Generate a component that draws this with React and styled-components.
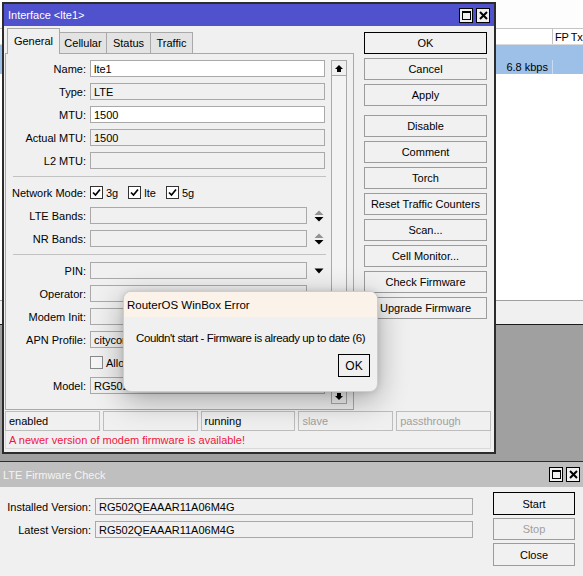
import React from "react";
import styled, { createGlobalStyle } from "styled-components";

const FONT = `"Liberation Sans", Arial, sans-serif`;
const FACE = "#f0f0f0";
const EDGE = "#a9a9a9";
const ACTIVE_TITLE = "#4f52cc";
const INACTIVE_TITLE = "#bfbfbf";
const SELECTED_ROW = "#9dc0e8";
const DISABLED_TEXT = "#a0a0a0";

const GlobalStyle = createGlobalStyle`
  html, body { margin: 0; padding: 0; }
  body { font-family: ${FONT}; font-size: 11px; color: #000; }
  * { box-sizing: border-box; }
`;

const Desktop = styled.div`
  position: relative;
  width: 583px;
  height: 576px;
  overflow: hidden;
  background: #a0a0a0;
`;

/* ---------- main list window behind ---------- */

const ListWindow = styled.section`
  position: absolute;
  left: -4px;
  top: -4px;
  width: 592px;
  height: 329px;
  display: flex;
  flex-direction: column;
  background: #fff;
  border-bottom: 1px solid #1c1c1c;
`;

const Toolbar = styled.div`
  height: 32px;
  flex: none;
  background: #fdfdfd;
`;

const ListHeader = styled.div`
  display: grid;
  grid-template-columns: 556px 1fr;
  height: 17px;
  flex: none;
  border-top: 1px solid #c4c4c4;
  border-bottom: 1px solid #dadada;
  background: #fff;
`;

const HeadCell = styled.div`
  display: flex;
  align-items: center;
  padding-left: 2px;
  letter-spacing: -0.3px;
  white-space: nowrap;
  border-left: ${(p) => (p.$first ? "none" : "1px solid #c4c4c4")};
`;

const ListRow = styled.div`
  display: grid;
  grid-template-columns: 556px 1fr;
  height: ${(p) => p.$h}px;
  flex: none;
  background: ${SELECTED_ROW};
`;

const RowCell = styled.div`
  display: flex;
  align-items: center;
  justify-content: ${(p) => (p.$right ? "flex-end" : "flex-start")};
  padding: 0 4px 0 3px;
  border-left: ${(p) => (p.$first ? "none" : "1px solid #c9dcf2")};
`;

const ListSpace = styled.div`
  flex: 1;
  background: #fff;
`;

const ListStatus = styled.div`
  height: 24px;
  flex: none;
  background: ${FACE};
  border-top: 1px solid #a0a0a0;
`;

/* ---------- shared window parts ---------- */

const TitleBar = styled.div`
  height: ${(p) => p.$h}px;
  flex: none;
  display: flex;
  align-items: center;
  justify-content: space-between;
  padding: 0 4px 0 ${(p) => p.$pad}px;
  background: ${(p) => (p.$active ? ACTIVE_TITLE : INACTIVE_TITLE)};
  color: ${(p) => (p.$active ? "#fff" : "#f4f4f4")};
  font-size: 11px;
`;

const TitleButtons = styled.div`
  display: flex;
  gap: 3px;
`;

const TitleBox = styled.span`
  width: 14px;
  height: 15px;
  display: flex;
  align-items: center;
  justify-content: center;
  background: #f0f0f0;
  border: 1px solid #000;
`;

const Button = styled.div`
  height: ${(p) => p.$h || 22}px;
  display: flex;
  align-items: center;
  justify-content: center;
  background: #f1f1f1;
  border: 1px solid ${(p) => (p.$default ? "#000" : "#9c9c9c")};
  color: ${(p) => (p.$disabled ? DISABLED_TEXT : "#000")};
  font-size: 11px;
  margin-top: ${(p) => p.$gapBefore || 0}px;
`;

const Field = styled.div`
  width: ${(p) => p.$w}px;
  height: 17px;
  flex: none;
  display: flex;
  align-items: center;
  padding: 0 3px;
  background: ${(p) => (p.$edit ? "#fff" : FACE)};
  border: 1px solid ${EDGE};
  white-space: nowrap;
  overflow: hidden;
`;

const Label = styled.div`
  width: ${(p) => p.$w}px;
  flex: none;
  text-align: right;
  margin-right: 4px;
  white-space: nowrap;
`;

const Row = styled.div`
  display: flex;
  align-items: center;
  height: 17px;
`;

function MaxIcon() {
  return (
    <svg width="9" height="9" viewBox="0 0 9 9">
      <rect x="0.5" y="0.5" width="8" height="8" fill="none" stroke="#000" />
      <rect x="0" y="0" width="9" height="2" fill="#000" />
    </svg>
  );
}

function CloseIcon() {
  return (
    <svg width="9" height="9" viewBox="0 0 9 9">
      <path d="M1 1 L8 8 M8 1 L1 8" stroke="#000" strokeWidth="2" />
    </svg>
  );
}

function WindowButtons() {
  return (
    <TitleButtons>
      <TitleBox><MaxIcon /></TitleBox>
      <TitleBox><CloseIcon /></TitleBox>
    </TitleButtons>
  );
}

/* ---------- interface window ---------- */

const InterfaceWindow = styled.section`
  position: absolute;
  left: 2px;
  top: 2px;
  width: 494px;
  height: 452px;
  display: flex;
  flex-direction: column;
  background: ${FACE};
  border: 2px solid #2c2c2c;
`;

const WinBody = styled.div`
  flex: 1;
  display: flex;
  flex-direction: column;
  padding: 2px 0 3px 1px;
`;

const TopArea = styled.div`
  display: flex;
`;

const LeftColumn = styled.div`
  width: 349px;
  display: flex;
  flex-direction: column;
`;

const TabRow = styled.div`
  display: flex;
  align-items: flex-end;
  height: 26px;
  padding-left: 3px;
  margin-bottom: -1px;
  position: relative;
  z-index: 1;
`;

const Tab = styled.div`
  height: ${(p) => (p.$active ? 26 : 22)}px;
  width: ${(p) => p.$w}px;
  display: flex;
  align-items: center;
  justify-content: center;
  padding-bottom: ${(p) => (p.$active ? 2 : 0)}px;
  background: ${(p) => (p.$active ? FACE : "#e3e3e3")};
  border: 1px solid ${EDGE};
  border-bottom: ${(p) => (p.$active ? "none" : `1px solid ${EDGE}`)};
  margin-left: -1px;
  font-size: 11px;
`;

const TabPanel = styled.div`
  height: 357px;
  display: flex;
  border: 1px solid ${EDGE};
  padding: 6px 6px 5px 0;
`;

const Form = styled.div`
  width: 320px;
  display: flex;
  flex-direction: column;
  gap: 6px;
`;

const Separator = styled.div`
  height: 1px;
  margin: 1px 0 1px 7px;
  background: #c2c2c2;
`;

const SideCtl = styled.div`
  width: 18px;
  display: flex;
  align-items: center;
  justify-content: center;
  padding-left: 5px;
`;

const ModeItem = styled.div`
  display: flex;
  align-items: center;
  gap: 3px;
  margin-right: 10px;
`;

const Check = styled.span`
  width: 13px;
  height: 13px;
  display: flex;
  align-items: center;
  justify-content: center;
  border: 1px solid ${(p) => (p.$on ? "#333" : "#8a8a8a")};
  background: ${(p) => (p.$on ? "#fff" : "#f6f6f6")};
`;

const ScrollBar = styled.div`
  width: 16px;
  margin-left: 5px;
  display: flex;
  flex-direction: column;
  justify-content: space-between;
  border: 1px solid ${EDGE};
  background: #f3f3f3;
`;

const ScrollBtn = styled.div`
  height: 15px;
  display: flex;
  align-items: center;
  justify-content: center;
  background: ${FACE};
  border-${(p) => (p.$down ? "top" : "bottom")}: 1px solid ${EDGE};
`;

const ButtonColumn = styled.div`
  width: 123px;
  margin: 4px 0 0 10px;
  display: flex;
  flex-direction: column;
  gap: 4px;
`;

const StatusBar = styled.div`
  width: 486px;
  margin-top: 1px;
  height: 20px;
  display: grid;
  grid-template-columns: repeat(5, 1fr);
  gap: 3px;
`;

const StatusCell = styled.div`
  display: flex;
  align-items: center;
  padding-left: 3px;
  border: 1px solid #bdbdbd;
  color: ${(p) => (p.$dim ? DISABLED_TEXT : "#000")};
`;

const Message = styled.div`
  width: 486px;
  height: 18px;
  display: flex;
  align-items: center;
  padding-left: 3px;
  color: #f0143f;
  border: 1px solid #d9d9d9;
  border-top: none;
`;

function SpinArrows() {
  return (
    <svg width="10" height="12" viewBox="0 0 10 12">
      <polygon points="0.5,5 5,0.5 9.5,5" fill="#8f948f" />
      <polygon points="0.5,7 9.5,7 5,11.5" fill="#000" />
    </svg>
  );
}

function DropArrow() {
  return (
    <svg width="10" height="6" viewBox="0 0 10 6">
      <polygon points="0.5,0.5 9.5,0.5 5,5.5" fill="#000" />
    </svg>
  );
}

function ScrollArrow({ down }) {
  return (
    <svg width="8" height="7" viewBox="0 0 8 7" style={down ? { transform: "rotate(180deg)" } : undefined}>
      <polygon points="4,0 8,4 6,4 6,7 2,7 2,4 0,4" fill="#000" />
    </svg>
  );
}

function Tick() {
  return (
    <svg width="9" height="9" viewBox="0 0 9 9">
      <path d="M1 4.5 L3.5 7 L8 1.5" fill="none" stroke="#000" strokeWidth="1.7" />
    </svg>
  );
}

const plainRows = [
  { label: "Name", value: "lte1", edit: true },
  { label: "Type", value: "LTE" },
  { label: "MTU", value: "1500", edit: true },
  { label: "Actual MTU", value: "1500" },
  { label: "L2 MTU", value: "" },
];

const sideButtons = [
  { text: "OK", def: true },
  { text: "Cancel" },
  { text: "Apply" },
  { text: "Disable", gap: 5 },
  { text: "Comment" },
  { text: "Torch" },
  { text: "Reset Traffic Counters" },
  { text: "Scan..." },
  { text: "Cell Monitor..." },
  { text: "Check Firmware" },
  { text: "Upgrade Firmware" },
];

function FieldRow({ label, value, edit, side }) {
  return (
    <Row>
      <Label $w={80}>{label}:</Label>
      <Field $w={side ? 217 : 235} $edit={edit}>{value}</Field>
      {side && <SideCtl>{side === "spin" ? <SpinArrows /> : <DropArrow />}</SideCtl>}
    </Row>
  );
}

function InterfaceDialog() {
  return (
    <InterfaceWindow>
      <TitleBar $active $h={22} $pad={4}>
        <span>Interface &lt;lte1&gt;</span>
        <WindowButtons />
      </TitleBar>
      <WinBody>
        <TopArea>
          <LeftColumn>
            <TabRow>
              <Tab $active $w={53}>General</Tab>
              <Tab $w={48}>Cellular</Tab>
              <Tab $w={45}>Status</Tab>
              <Tab $w={43}>Traffic</Tab>
            </TabRow>
            <TabPanel>
              <Form>
                {plainRows.map((r) => (
                  <FieldRow key={r.label} {...r} />
                ))}
                <Separator />
                <Row>
                  <Label $w={80}>Network Mode:</Label>
                  {["3g", "lte", "5g"].map((m) => (
                    <ModeItem key={m}>
                      <Check $on><Tick /></Check>
                      {m}
                    </ModeItem>
                  ))}
                </Row>
                <FieldRow label="LTE Bands" side="spin" />
                <FieldRow label="NR Bands" side="spin" />
                <Separator />
                <FieldRow label="PIN" side="drop" />
                <FieldRow label="Operator" side="drop" />
                <FieldRow label="Modem Init" />
                <FieldRow label="APN Profile" value="citycom" side="drop" />
                <Row>
                  <Label $w={80} />
                  <ModeItem>
                    <Check />
                    Allow Roaming
                  </ModeItem>
                </Row>
                <FieldRow label="Model" value="RG502Q-EA" />
              </Form>
              <ScrollBar>
                <ScrollBtn><ScrollArrow /></ScrollBtn>
                <ScrollBtn $down><ScrollArrow down /></ScrollBtn>
              </ScrollBar>
            </TabPanel>
          </LeftColumn>
          <ButtonColumn>
            {sideButtons.map((b) => (
              <Button key={b.text} $default={b.def} $gapBefore={b.gap}>
                {b.text}
              </Button>
            ))}
          </ButtonColumn>
        </TopArea>
        <StatusBar>
          <StatusCell>enabled</StatusCell>
          <StatusCell />
          <StatusCell>running</StatusCell>
          <StatusCell $dim>slave</StatusCell>
          <StatusCell $dim>passthrough</StatusCell>
        </StatusBar>
        <Message>A newer version of modem firmware is available!</Message>
      </WinBody>
    </InterfaceWindow>
  );
}

/* ---------- LTE firmware check window ---------- */

const FirmwareWindow = styled.section`
  position: absolute;
  left: -3px;
  top: 461px;
  width: 588px;
  height: 118px;
  display: flex;
  flex-direction: column;
  background: ${FACE};
  border: 1px solid #2c2c2c;
`;

const FirmwareBody = styled.div`
  flex: 1;
  display: flex;
  padding: 5px 9px 0 0;
`;

const FirmwareFields = styled.div`
  flex: 1;
  display: flex;
  flex-direction: column;
  gap: 6px;
  padding-top: 6px;
`;

const FirmwareButtons = styled.div`
  width: 82px;
  display: flex;
  flex-direction: column;
  gap: 3px;
`;

function FirmwareCheck() {
  return (
    <FirmwareWindow>
      <TitleBar $h={25} $pad={5}>
        <span>LTE Firmware Check</span>
        <WindowButtons />
      </TitleBar>
      <FirmwareBody>
        <FirmwareFields>
          <Row>
            <Label $w={93}>Installed Version:</Label>
            <Field $w={378}>RG502QEAAAR11A06M4G</Field>
          </Row>
          <Row>
            <Label $w={93}>Latest Version:</Label>
            <Field $w={378}>RG502QEAAAR11A06M4G</Field>
          </Row>
        </FirmwareFields>
        <FirmwareButtons>
          <Button $default $h={23}>Start</Button>
          <Button $disabled $h={22}>Stop</Button>
          <Button $h={23}>Close</Button>
        </FirmwareButtons>
      </FirmwareBody>
    </FirmwareWindow>
  );
}

/* ---------- error message box ---------- */

const ErrorBox = styled.div`
  position: absolute;
  left: 123px;
  top: 291px;
  width: 255px;
  height: 101px;
  display: flex;
  flex-direction: column;
  border-radius: 8px;
  overflow: hidden;
  background: ${FACE};
  border: 1px solid #cdcdcd;
  box-shadow: 0 8px 30px rgba(0, 0, 0, 0.32), 0 0 6px rgba(0, 0, 0, 0.12);
`;

const ErrorTitle = styled.div`
  height: 25px;
  flex: none;
  display: flex;
  align-items: center;
  padding-left: 3px;
  background: #fbf3ea;
  font-size: 11.5px;
`;

const ErrorText = styled.div`
  margin: 15px 0 0 12px;
  font-size: 11.5px;
  letter-spacing: -0.4px;
  white-space: nowrap;
`;

const ErrorFooter = styled.div`
  display: flex;
  justify-content: flex-end;
  padding: 10px 7px 0 0;
`;

const OkButton = styled(Button)`
  width: 32px;
  height: 23px;
  font-size: 12px;
  background: #f0f0f0;
`;

function ErrorDialog() {
  return (
    <ErrorBox>
      <ErrorTitle>RouterOS WinBox Error</ErrorTitle>
      <ErrorText>Couldn't start - Firmware is already up to date (6)</ErrorText>
      <ErrorFooter>
        <OkButton $default>OK</OkButton>
      </ErrorFooter>
    </ErrorBox>
  );
}

export default function App() {
  return (
    <>
      <GlobalStyle />
      <Desktop>
        <ListWindow>
          <Toolbar />
          <ListHeader>
            <HeadCell $first />
            <HeadCell>FP Tx</HeadCell>
          </ListHeader>
          <ListRow $h={15} />
          <ListRow $h={14}>
            <RowCell $first $right>6.8 kbps</RowCell>
            <RowCell />
          </ListRow>
          <ListSpace />
          <ListStatus />
        </ListWindow>
        <InterfaceDialog />
        <FirmwareCheck />
        <ErrorDialog />
      </Desktop>
    </>
  );
}
